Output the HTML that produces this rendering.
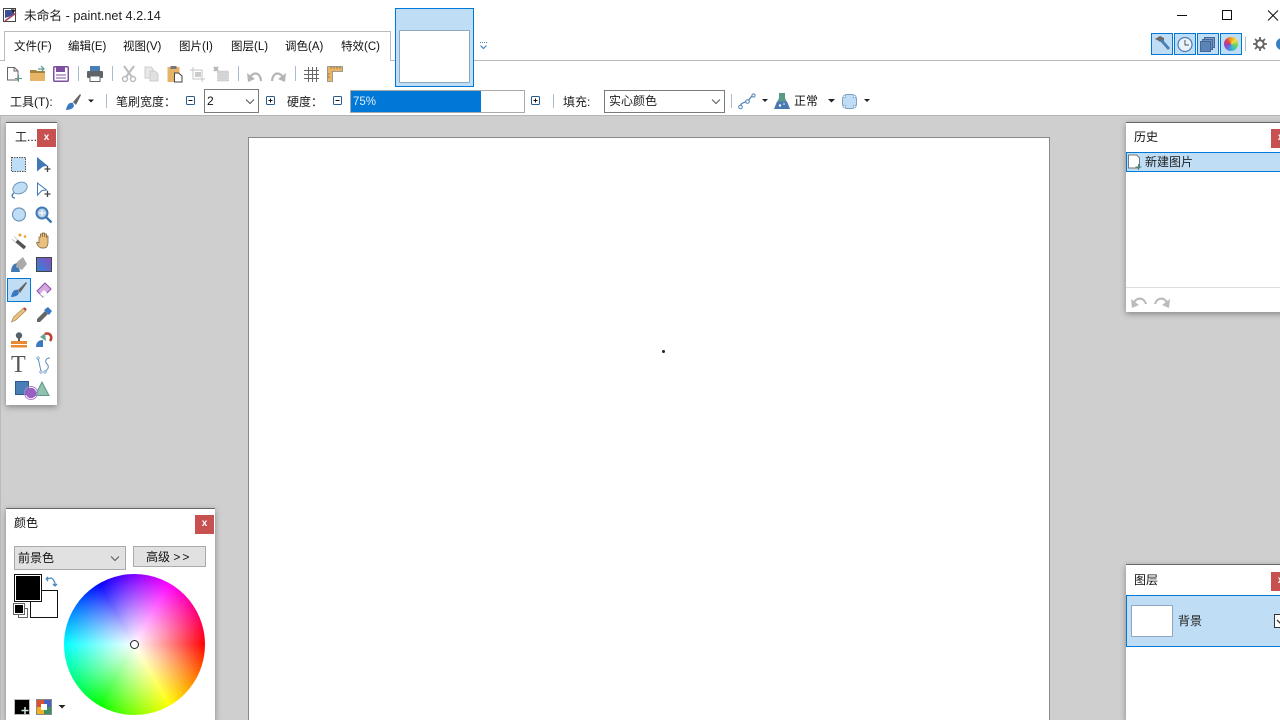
<!DOCTYPE html>
<html><head><meta charset="utf-8"><style>
html,body{margin:0;padding:0;width:1280px;height:720px;overflow:hidden;background:#fff}
body{position:relative;font-family:"Liberation Sans","Noto Sans CJK SC",sans-serif;font-size:12px;color:#111}
.a{position:absolute}
.t{position:absolute;white-space:nowrap;line-height:16px}
svg{position:absolute;overflow:visible}
.panel{position:absolute;background:#fff;border-top:1px solid #666;box-shadow:0 2px 6px rgba(0,0,0,.35)}
.x{position:absolute;background:#c75050;color:#fff;font-weight:bold;font-size:10px;text-align:center;width:19px;height:19px;line-height:18px}
.sep{position:absolute;width:1px;background:#a9bccf}
.tg{position:absolute;border:1px solid #0078d7;background:#bfddf5;box-sizing:border-box}
</style></head><body>
<!-- title -->
<svg style="left:2px;top:7px" width="16" height="16" viewBox="0 0 16 16"><rect x="1.500" y="1.500" width="12" height="13" fill="#fff" stroke="#444"/><path d="M3 3h9v5L3 11z" fill="#3c4f96"/><path d="M3 14 14 6" stroke="#a8465a" stroke-width="1.600"/><path d="M9 2l5 1-3 3z" fill="#222"/></svg>
<div class="t" style="left:24px;top:8px;font-size:12.700px;color:#222">未命名 - paint.net 4.2.14</div>
<svg style="left:1170px;top:6px" width="110" height="20"><path d="M7 9.500h10" stroke="#111"/><rect x="52.500" y="4.500" width="9" height="9" fill="none" stroke="#111" stroke-width="1"/><path d="M98 4.500l10 10M108 4.500l-10 10" stroke="#111"/></svg>
<!-- menu tab -->
<div class="a" style="left:4px;top:31px;width:387px;height:30px;border:1px solid #bbb;border-bottom:none;box-sizing:border-box;background:#fff"></div>
<div class="a" style="left:391px;top:60px;width:889px;height:1px;background:#bbb"></div>
<div class="a" style="left:0;top:60px;width:4px;height:1px;background:#bbb"></div>
<div class="t" style="left:14px;top:39px;font-size:11.500px">文件(F)</div>
<div class="t" style="left:68px;top:39px;font-size:11.500px">编辑(E)</div>
<div class="t" style="left:123px;top:39px;font-size:11.500px">视图(V)</div>
<div class="t" style="left:179px;top:39px;font-size:11.500px">图片(I)</div>
<div class="t" style="left:231px;top:39px;font-size:11.500px">图层(L)</div>
<div class="t" style="left:285px;top:39px;font-size:11.500px">调色(A)</div>
<div class="t" style="left:341px;top:39px;font-size:11.500px">特效(C)</div>
<!-- thumb -->
<div class="a" style="left:395px;top:8px;width:79px;height:79px;box-sizing:border-box;border:1px solid #0078d7;background:#bfddf5"></div>
<div class="a" style="left:399px;top:30px;width:71px;height:53px;box-sizing:border-box;border:1px solid #8ea6c0;background:#fff;border-radius:1px"></div>
<svg style="left:479px;top:42px" width="10" height="9"><path d="M1 .5h7" stroke="#4a86c0" stroke-dasharray="1 1"/><path d="M1.500 3.500l3 3 3-3" fill="none" stroke="#4a86c0" stroke-width="1.200"/></svg>
<!-- right toggles -->
<div class="tg" style="left:1151px;top:33px;width:22px;height:22px"></div>
<div class="tg" style="left:1174px;top:33px;width:22px;height:22px"></div>
<div class="tg" style="left:1197px;top:33px;width:22px;height:22px"></div>
<div class="tg" style="left:1220px;top:33px;width:22px;height:22px"></div>
<svg style="left:1151px;top:33px" width="22" height="22"><path d="M4 6l5-3 4 2 0 3-2-1-2 2-1-1z" fill="#6a6a6a"/><path d="M9 8l2-2 8 9-2 2z" fill="#4a7fb5"/></svg>
<svg style="left:1174px;top:33px" width="22" height="22"><circle cx="11" cy="11.500" r="7" fill="#eaf3fb" stroke="#4a7fb5" stroke-width="1.200"/><path d="M11 7v5h4" fill="none" stroke="#555"/></svg>
<svg style="left:1197px;top:33px" width="22" height="22"><rect x="7.500" y="4.500" width="10" height="10" fill="#7a9cc4" stroke="#44689a"/><rect x="5.500" y="6.500" width="10" height="10" fill="#6a90bd" stroke="#44689a"/><rect x="3.500" y="8.500" width="10" height="10" fill="#5a84b5" stroke="#44689a"/></svg>
<div class="a" style="left:1224px;top:37px;width:14px;height:14px;border-radius:50%;background:conic-gradient(#f0a020,#f0e040,#70d060,#40c0c0,#5080e0,#a040c0,#e04050,#f0a020)"></div>
<div class="sep" style="left:1245px;top:37px;height:14px"></div>
<svg style="left:1253px;top:37px" width="14" height="14" viewBox="0 0 14 14"><circle cx="7" cy="7" r="3.700" fill="none" stroke="#666" stroke-width="2"/><path d="M7 0v3M7 11v3M0 7h3M11 7h3M2 2l2 2M10 10l2 2M12 2l-2 2M4 10l-2 2" stroke="#666" stroke-width="1.800"/></svg>
<div class="a" style="left:1276px;top:38px;width:12px;height:12px;border-radius:50%;background:#3a7fc0"></div>
<!-- toolbar 1 -->
<svg style="left:0;top:60px" width="350" height="28">
<path d="M7.500 7.500h7l3.500 3.500v9H7.500z" fill="#fff" stroke="#666"/><path d="M14 7.500V11h4" fill="none" stroke="#666"/><path d="M18.500 15v7M15 18.500h7" stroke="#5a9a88"/>
<path d="M30 10h6l1 1h8v4H30z" fill="#a5823f"/><path d="M30 13h15v8H30z" fill="#e8b465"/><path d="M38 9h5M41 6l3 3-3 3" fill="none" stroke="#5a9a88" stroke-width="1.200"/>
<rect x="53.750" y="6.750" width="14.500" height="14.500" rx="1" fill="#fff" stroke="#7d4fa0" stroke-width="1.500"/><rect x="56" y="7" width="9" height="5" fill="#7d4fa0"/><path d="M56 15h10M56 18h10" stroke="#7d4fa0"/>
<path d="M90 6h10v6H90z" fill="#4a7fb5"/><rect x="87" y="11" width="16" height="7" rx="1" fill="#5f6468"/><rect x="90" y="16" width="10" height="5.500" fill="#fff" stroke="#5f6468"/>
<path d="M124 6l8 11M134 6l-8 11" stroke="#bbb" stroke-width="2"/><circle cx="125" cy="19" r="2.500" fill="none" stroke="#bbb" stroke-width="1.500"/><circle cx="133" cy="19" r="2.500" fill="none" stroke="#bbb" stroke-width="1.500"/>
<path d="M145 7h6l2 2v9h-8z" fill="#e8e8e8" stroke="#ccc"/><path d="M150 11h5l3 3v7h-8z" fill="#e0e0e0" stroke="#ccc"/>
<rect x="167.500" y="7" width="12" height="15" fill="#e6b466"/><rect x="170.500" y="6" width="6" height="3" fill="#777"/><path d="M174.500 13h4l3.500 3v6h-7.500z" fill="#fff" stroke="#444"/>
<path d="M193 7v12h12M190 10h12v12" fill="none" stroke="#c4c4c4"/><rect x="195" y="12" width="6" height="5" fill="#ccc"/>
<path d="M214 7l4 4M218 7l-4 4" stroke="#b5b5b5" stroke-width="2"/><rect x="217.500" y="11" width="11" height="10" fill="#d4d4d4" stroke="#c4c4c4" stroke-dasharray="1 1"/>
<path d="M247 13l1 9 7-3z" fill="#b5b5b5"/><path d="M250 18c2-6 10-7 11 3" fill="none" stroke="#b5b5b5" stroke-width="2.200"/>
<path d="M286 13l-1 9-7-3z" fill="#b5b5b5"/><path d="M283 18c-2-6-10-7-11 3" fill="none" stroke="#b5b5b5" stroke-width="2.200"/>
<path d="M304 10.500h15M304 14.500h15M304 18.500h15M308.500 7v15M312.500 7v15M316.500 7v15" stroke="#666" stroke-width="1"/>
<path d="M327.500 6.500h15v5h-10v10h-5z" fill="#e8b465" stroke="#888" stroke-width=".8"/><path d="M331 6.500v2M334 6.500v2M337 6.500v2M340 6.500v2M327.500 14h2M327.500 17h2" stroke="#66583c" stroke-width=".8"/>
</svg>
<div class="sep" style="left:78px;top:66px;height:15px"></div>
<div class="sep" style="left:112px;top:66px;height:15px"></div>
<div class="sep" style="left:238px;top:66px;height:15px"></div>
<div class="sep" style="left:295px;top:66px;height:15px"></div>
<!-- toolbar 2 -->
<div class="t" style="left:10px;top:94px;font-size:12px">工具(T):</div>
<svg style="left:65px;top:94px" width="32" height="16"><path d="M1 16c1-5 3-8 7-7l1 3c-1 3-5 4-8 4z" fill="#3a78c0"/><path d="M8 8l7-8 1 1-5 10z" fill="#666"/><path d="M23 5.500h6l-3 3z" fill="#222"/></svg>
<div class="sep" style="left:106px;top:94px;height:14px"></div>
<div class="t" style="left:116px;top:94px;font-size:12px;color:#222">笔刷宽度：</div>
<svg style="left:186px;top:96px" width="10" height="10"><rect x=".5" y=".5" width="8" height="8" rx="1" fill="#fff" stroke="#2a5c8c"/><path d="M2.500 4.500h4" stroke="#111"/></svg>
<div class="a" style="left:204px;top:89px;width:55px;height:24px;box-sizing:border-box;border:1px solid #7a7a7a;background:#fff"></div>
<div class="t" style="left:207px;top:93px;font-size:12px">2</div>
<svg style="left:245px;top:98px" width="12" height="8"><path d="M1 1.500l4 4 4-4" fill="none" stroke="#555"/></svg>
<svg style="left:266px;top:96px" width="10" height="10"><rect x=".5" y=".5" width="8" height="8" rx="1" fill="#fff" stroke="#2a5c8c"/><path d="M2.500 4.500h4M4.500 2.500v4" stroke="#111"/></svg>
<div class="t" style="left:287px;top:94px;font-size:12px;color:#222">硬度：</div>
<svg style="left:333px;top:96px" width="10" height="10"><rect x=".5" y=".5" width="8" height="8" rx="1" fill="#fff" stroke="#2a5c8c"/><path d="M2.500 4.500h4" stroke="#111"/></svg>
<div class="a" style="left:350px;top:90px;width:175px;height:23px;box-sizing:border-box;border:1px solid #aaa;background:#fff"></div>
<div class="a" style="left:351px;top:91px;width:130px;height:21px;background:#0078d7"></div>
<div class="t" style="left:353px;top:94px;font-size:11.500px;color:#dfeefb">75%</div>
<svg style="left:531px;top:96px" width="10" height="10"><rect x=".5" y=".5" width="8" height="8" rx="1" fill="#fff" stroke="#2a5c8c"/><path d="M2.500 4.500h4M4.500 2.500v4" stroke="#111"/></svg>
<div class="sep" style="left:553px;top:94px;height:14px"></div>
<div class="t" style="left:563px;top:94px;font-size:12px;color:#222">填充:</div>
<div class="a" style="left:604px;top:90px;width:121px;height:23px;box-sizing:border-box;border:1px solid #7a7a7a;background:#fff"></div>
<div class="t" style="left:609px;top:93px;font-size:12px;color:#222">实心颜色</div>
<svg style="left:711px;top:98px" width="12" height="8"><path d="M1 1.500l4 4 4-4" fill="none" stroke="#555"/></svg>
<div class="sep" style="left:731px;top:94px;height:14px"></div>
<svg style="left:738px;top:93px" width="34" height="18"><path d="M2.500 14c0-5 4-4 7-6s3-5 7-6" fill="none" stroke="#4a7fb5" stroke-width="1.200"/><circle cx="2.500" cy="14" r="1.800" fill="#fff" stroke="#4a7fb5"/><circle cx="9.500" cy="8.500" r="1.800" fill="#fff" stroke="#4a7fb5"/><circle cx="15.500" cy="2.500" r="1.600" fill="#fff" stroke="#4a7fb5"/><path d="M24 6h6l-3 3z" fill="#222"/></svg>
<svg style="left:774px;top:92px" width="16" height="18"><path d="M5 1h6v5l5 11H0L5 6z" fill="#5c9a88"/><path d="M3 9.500h10l3 7.500H0z" fill="#4a78b0"/><circle cx="6" cy="13.500" r="1.200" fill="#fff"/><circle cx="10" cy="12" r=".8" fill="#fff"/></svg>
<div class="t" style="left:794px;top:93px;font-size:12px">正常</div>
<svg style="left:826px;top:98px" width="10" height="6"><path d="M2 1h7L5.500 4.500z" fill="#222"/></svg>
<svg style="left:840px;top:92px" width="32" height="18"><rect x="2.500" y="2.500" width="14" height="14" rx="4.500" fill="#bfddf5" stroke="#7aa0c4"/><circle cx="4.500" cy="4.500" r="1.300" fill="#fff" stroke="#7aa0c4" stroke-width=".7"/><circle cx="14.500" cy="4.500" r="1.300" fill="#fff" stroke="#7aa0c4" stroke-width=".7"/><circle cx="4.500" cy="14.500" r="1.300" fill="#fff" stroke="#7aa0c4" stroke-width=".7"/><circle cx="14.500" cy="14.500" r="1.300" fill="#fff" stroke="#7aa0c4" stroke-width=".7"/><path d="M24 7h6l-3 3z" fill="#222"/></svg>
<!-- workspace -->
<div class="a" style="left:0;top:115px;width:1280px;height:605px;background:#cfcfcf;border-top:1px solid #b5b5b5;box-sizing:border-box"></div>
<div class="a" style="left:248px;top:137px;width:802px;height:583px;background:#fff;border-left:1px solid #8a8a8a;border-top:1px solid #8a8a8a;border-right:1px solid #8a8a8a;box-sizing:border-box"></div>
<div class="a" style="left:662px;top:350px;width:3px;height:3px;border-radius:50%;background:#222"></div>
<div class="a" style="left:0;top:115px;width:1px;height:605px;background:#bbb"></div>
<!-- tools panel -->
<div class="panel" style="left:6px;top:122px;width:51px;height:282px"></div>
<div class="t" style="left:15px;top:129px;font-size:12px">工...</div>
<div class="x" style="left:37px;top:129px;height:18px;width:19px">x</div>
<div class="a" style="left:7px;top:278px;width:24px;height:24px;box-sizing:border-box;border:1px solid #0078d7;background:#bfddf5"></div>
<svg style="left:0;top:0" width="60" height="410">
<defs><linearGradient id="g" x1="0" y1="1" x2="1" y2="0"><stop offset="0" stop-color="#2f86d8"/><stop offset="1" stop-color="#8a4cc0"/></linearGradient></defs>
<rect x="11.500" y="157.500" width="14" height="14" fill="#bfddf5" stroke="#555" stroke-dasharray="1.500 1"/>
<path d="M37 157l11 9-5 .5-6 5z" fill="#3f78b5"/><path d="M47.500 166v6M44.500 169h6" stroke="#444" stroke-width="1.300"/>
<ellipse cx="20" cy="188" rx="7.500" ry="5.500" fill="#bfddf5" stroke="#7098bd" transform="rotate(-25 20 188)"/><path d="M14 193c-3 2-2 5 1 5" fill="none" stroke="#3f78b5" stroke-width="1.300"/>
<path d="M37.500 183l9 7-4.500 .5-4.500 4.500z" fill="#fff" stroke="#3f78b5"/><path d="M47.500 191v6M44.500 194h6" stroke="#444" stroke-width="1.300"/>
<circle cx="19" cy="214.500" r="6.500" fill="#bfddf5" stroke="#7098bd" stroke-width="1.200"/>
<circle cx="42" cy="213" r="5.500" fill="#b8d0e8" stroke="#3f78b5" stroke-width="2"/><path d="M46 217l5.500 5.500" stroke="#3f78b5" stroke-width="2.500"/><path d="M42 210v6M39 213h6" stroke="#fff"/>
<path d="M13 238l12 10" stroke="#555" stroke-width="3.500"/><path d="M12.500 237.500l4 3.500" stroke="#fff" stroke-width="3"/><circle cx="20" cy="235" r="1.500" fill="#e8a030"/><circle cx="25" cy="236.500" r="1.300" fill="#e8a030"/>
<path d="M41 248c-3-1-5-5-4-6l2 1v-6h1.500v-3h2v3-4h2v4-3h2v4-2h1.500v7c0 3-2 5-3.500 5z" fill="#e8c080" stroke="#7a5a30" stroke-width=".7"/>
<path d="M11 272c0-6 3-9 7-9l2 9z" fill="#3f78b5"/><path d="M17 262l6-5 4 7-5 6-6-3z" fill="#aaa"/>
<rect x="36.500" y="257.500" width="15" height="14" fill="url(#g)" stroke="#444"/>
<path d="M11 297c1-5 3-8 7-7l1 3c-1 3-5 4-8 4z" fill="#3a78c0"/><path d="M18 290l8-8 1 1-7 10z" fill="#666"/>
<path d="M37 291l8-8 6 6-8 8z" fill="#d6a8e0" stroke="#8e4fa8"/><path d="M40 294l4-4 3.500 3.500-4 3.500z" fill="#fff"/>
<path d="M11.500 322l2-5 10-9 2.500 2.500-10 9.500z" fill="#eac07a" stroke="#9a8060" stroke-width=".6"/><path d="M24 308l2 2" stroke="#c04040" stroke-width="2.200"/>
<path d="M37 322l0-3 8-8 3 3-8 8z" fill="#666"/><path d="M44 310l4-3 4 4-3 4z" fill="#3a78c0"/>
<circle cx="19" cy="335.500" r="3.200" fill="#5a6068"/><path d="M18 338h2v4h-2z" fill="#5a6068"/><rect x="11" y="341" width="16" height="3" fill="#e88a30"/><rect x="11" y="345" width="16" height="2.500" fill="#e88a30"/>
<path d="M36 347c0-5 3-7 7-7v7z" fill="#3a78c0"/><path d="M40 337l5-4 1 8z" fill="#6aa090"/><path d="M45 334c5-2 8 3 5 7" fill="none" stroke="#c04030" stroke-width="2.600"/>
<path d="M38 358l3 13M50 358c-5 0-5 4-3 6s2 5-2 7" fill="none" stroke="#5e8fc0"/><circle cx="38" cy="358" r="1.200" fill="#fff" stroke="#5e8fc0" stroke-width=".7"/><circle cx="41" cy="372" r="1.200" fill="#fff" stroke="#5e8fc0" stroke-width=".7"/><circle cx="45" cy="372" r="1.200" fill="#fff" stroke="#5e8fc0" stroke-width=".7"/>
<rect x="15.500" y="381.500" width="13" height="13" fill="#4a7fb5" stroke="#2a5c90"/>
<path d="M42 382l7 13.500H35z" fill="#8fc0b0" stroke="#5c9a88"/>
<circle cx="31" cy="393" r="5.200" fill="#9a60c0"/><circle cx="31" cy="393" r="6.500" fill="none" stroke="#b080d0"/>
</svg>
<div class="t" style="left:11px;top:353px;font-family:'Liberation Serif',serif;font-size:24px;line-height:24px;color:#555">T</div>
<!-- colors panel -->
<div class="panel" style="left:6px;top:508px;width:209px;height:212px"></div>
<div class="t" style="left:14px;top:515px;font-size:12px">颜色</div>
<div class="x" style="left:195px;top:515px">x</div>
<div class="a" style="left:14px;top:546px;width:112px;height:24px;box-sizing:border-box;border:1px solid #aaa;background:#e1e1e1"></div>
<div class="t" style="left:18px;top:550px;font-size:12px">前景色</div>
<svg style="left:110px;top:555px" width="12" height="8"><path d="M1 1.500l4 4 4-4" fill="none" stroke="#555"/></svg>
<div class="a" style="left:133px;top:546px;width:73px;height:21px;box-sizing:border-box;border:1px solid #aaa;background:#e1e1e1"></div>
<div class="t" style="left:146px;top:549px;font-size:12px">高级 <span style="letter-spacing:2px">&gt;&gt;</span></div>
<div class="a" style="left:30px;top:590px;width:28px;height:28px;box-sizing:border-box;border:1px solid #111;background:#fff"></div>
<div class="a" style="left:14px;top:574px;width:28px;height:28px;box-sizing:border-box;border:1px solid #111;background:#000;box-shadow:inset 0 0 0 1px #fff"></div>
<svg style="left:45px;top:576px" width="12" height="12"><path d="M2 3l4-1c2 0 3 3 4 5v2M1 3l2-2M1 3l2 2M10 10l-2-2M10 10l2-2" fill="none" stroke="#4a86c0" stroke-width="1.300"/></svg>
<div class="a" style="left:18px;top:608px;width:10px;height:10px;box-sizing:border-box;border:1px solid #666;background:#fff"></div>
<div class="a" style="left:14px;top:604px;width:10px;height:10px;box-sizing:border-box;border:1px solid #fff;outline:1px solid #666;background:#000"></div>
<div class="a" style="left:64px;top:574px;width:141px;height:141px;border-radius:50%;background:radial-gradient(closest-side,#fff 0%,rgba(255,255,255,.6) 42%,rgba(255,255,255,0) 100%),conic-gradient(from 0deg,#8000ff,#ff00ff 30deg,#ff0080 60deg,#f00 90deg,#ff8000 120deg,#ff0 150deg,#80ff00 180deg,#0f0 210deg,#00ff80 240deg,#0ff 270deg,#0080ff 300deg,#00f 330deg,#8000ff 360deg)"></div>
<div class="a" style="left:130px;top:640px;width:9px;height:9px;box-sizing:border-box;border:1px solid #222;border-radius:50%;background:#fff"></div>
<div class="a" style="left:14px;top:699px;width:16px;height:16px;box-sizing:border-box;background:#000;border:1px solid #bbb"></div>
<svg style="left:14px;top:699px" width="16" height="16"><path d="M11 8v7M7.500 11.500h7" stroke="#cfe8e0" stroke-width="1.500"/></svg>
<div class="a" style="left:36px;top:699px;width:16px;height:16px;box-sizing:border-box;border:1px solid #888;background:conic-gradient(#4a60c0 0 90deg,#3a9060 90deg 180deg,#f0b020 180deg 270deg,#e05030 270deg)"></div>
<div class="a" style="left:41px;top:704px;width:6px;height:6px;background:#fff"></div>
<svg style="left:58px;top:704px" width="8" height="6"><path d="M.5 1h7L4 4.500z" fill="#222"/></svg>
<!-- history panel -->
<div class="panel" style="left:1126px;top:122px;width:160px;height:189px"></div>
<div class="t" style="left:1134px;top:129px;font-size:12px">历史</div>
<div class="x" style="left:1271px;top:129px">x</div>
<div class="a" style="left:1126px;top:152px;width:160px;height:20px;box-sizing:border-box;border:1px solid #0078d7;background:#bfddf5"></div>
<svg style="left:1127px;top:154px" width="16" height="16"><path d="M1.500 1h8l3 3v10h-11z" fill="#fff" stroke="#777"/><path d="M11.500 10v6M8.500 13h6" stroke="#3f8f76"/></svg>
<div class="t" style="left:1145px;top:154px;font-size:12px;color:#222">新建图片</div>
<div class="a" style="left:1126px;top:287px;width:160px;height:1px;background:#ddd"></div>
<svg style="left:1130px;top:294px" width="42" height="14"><path d="M1 5l1 9 7-3z" fill="#bbb"/><path d="M4 9c2-6 10-6 12 1" fill="none" stroke="#bbb" stroke-width="2.200"/><path d="M40 5l-1 9-7-3z" fill="#bbb"/><path d="M37 9c-2-6-10-6-12 1" fill="none" stroke="#bbb" stroke-width="2.200"/></svg>
<!-- layers panel -->
<div class="panel" style="left:1126px;top:564px;width:160px;height:156px"></div>
<div class="t" style="left:1134px;top:572px;font-size:12px">图层</div>
<div class="x" style="left:1271px;top:572px">x</div>
<div class="a" style="left:1126px;top:595px;width:160px;height:52px;box-sizing:border-box;border:1px solid #0078d7;background:#bfddf5"></div>
<div class="a" style="left:1131px;top:605px;width:42px;height:32px;box-sizing:border-box;border:1px solid #8ea6c0;border-radius:1px;background:#fff"></div>
<div class="t" style="left:1178px;top:613px;font-size:12px;color:#222">背景</div>
<div class="a" style="left:1274px;top:614px;width:14px;height:14px;box-sizing:border-box;border:1px solid #333;background:#fff"></div>
<svg style="left:1274px;top:614px" width="14" height="14"><path d="M3 6l3 3 5-5" fill="none" stroke="#333" stroke-width="1.300"/></svg>
</body></html>
